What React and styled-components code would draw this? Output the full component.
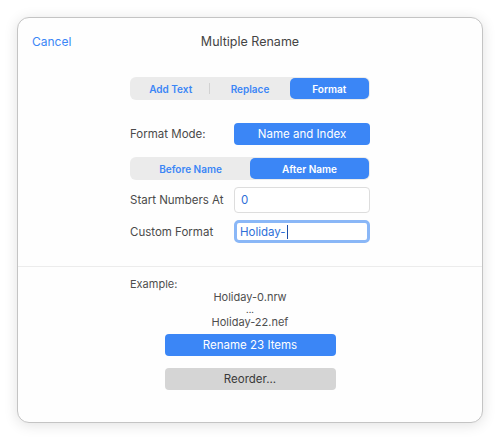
import React from 'react';
import styled, { createGlobalStyle } from 'styled-components';

const GlobalStyle = createGlobalStyle`
    body {
        margin: 0;
        background: #ffffff;
        font-family: Inter, "Liberation Sans", sans-serif;
        -webkit-font-smoothing: antialiased;
    }
`;

const BLUE = '#3b86f6';

const Stage = styled.div`
    width: 500px;
    height: 440px;
    padding: 17px;
    box-sizing: border-box;
`;

const Panel = styled.div`
    width: 466px;
    height: 406px;
    box-sizing: border-box;
    border: 1px solid #c4c4c4;
    border-radius: 12px;
    background: #fefefe;
    box-shadow: 0 2px 14px rgba(0, 0, 0, 0.12);
    display: flex;
    flex-direction: column;
`;

const Header = styled.div`
    height: 46px;
    display: grid;
    grid-template-columns: 1fr auto 1fr;
    align-items: center;
    padding: 0 14px;
`;

const CancelLink = styled.span`
    color: ${BLUE};
    font-size: 12px;
`;

const Title = styled.span`
    color: #454545;
    font-size: 12.5px;
`;

const Column = styled.div`
    width: 240px;
    margin: 0 auto;
    display: flex;
    flex-direction: column;
`;

const Form = styled(Column)`
    padding-top: 13px;
    padding-bottom: 23px;
`;

const Segmented = styled.div`
    height: 23px;
    box-sizing: border-box;
    display: flex;
    align-items: center;
    padding: 1px;
    border-radius: 6px;
    background: #ebebeb;
    margin-top: ${(p) => p.top || 0}px;
`;

const Segment = styled.div`
    flex: 1;
    height: 100%;
    display: flex;
    align-items: center;
    justify-content: center;
    position: relative;
    border-radius: 5px;
    font-size: 10px;
    font-weight: 600;
    color: ${(p) => (p.active ? '#ffffff' : BLUE)};
    background: ${(p) => (p.active ? BLUE : 'transparent')};

    ${(p) => p.divider && `
        &::after {
            content: '';
            position: absolute;
            right: 0;
            top: 5px;
            bottom: 5px;
            width: 1px;
            background: #d2d2d2;
        }
    `}
`;

const Row = styled.div`
    display: flex;
    align-items: center;
    margin-top: ${(p) => p.top || 0}px;
`;

const Label = styled.span`
    width: 104px;
    flex: none;
    font-size: 11.5px;
    color: #4a4a4a;
`;

const BlueButton = styled.div`
    flex: 1;
    height: 22px;
    display: flex;
    align-items: center;
    justify-content: center;
    border-radius: 4px;
    background: ${BLUE};
    color: #ffffff;
    font-size: 11.5px;
`;

const Field = styled.div`
    flex: 1;
    height: ${(p) => (p.focused ? 23 : 26)}px;
    box-sizing: border-box;
    display: flex;
    align-items: center;
    padding: 0 ${(p) => (p.focused ? 3 : 6)}px;
    border-radius: ${(p) => (p.focused ? 5 : 4)}px;
    border: ${(p) => (p.focused ? '3px solid #8ab7f7' : '1px solid #dddddd')};
    background: #ffffff;
    color: #2e6fd8;
    font-size: 11.5px;
`;

const Caret = styled.span`
    display: inline-block;
    width: 1px;
    height: 14px;
    margin-left: 1px;
    background: #1d4fa8;
`;

const Divider = styled.div`
    height: 1px;
    background: #ececec;
`;

const Bottom = styled(Column)`
    padding-top: 10px;
`;

const Line = styled.div`
    align-self: ${(p) => (p.left ? 'flex-start' : 'center')};
    line-height: ${(p) => p.h || 13}px;
    height: ${(p) => p.h || 13}px;
    font-size: 11px;
    color: #4e4e4e;
`;

const Ellipsis = styled(Line)`
    font-size: 9px;
    line-height: 10px;
    height: 10px;
    margin: 1px 0;
`;

const ActionButton = styled.div`
    width: 171px;
    height: 22px;
    align-self: center;
    display: flex;
    align-items: center;
    justify-content: center;
    border-radius: 4px;
    margin-top: ${(p) => p.top}px;
    background: ${(p) => (p.primary ? BLUE : '#d5d5d5')};
    color: ${(p) => (p.primary ? '#ffffff' : '#3a3a3a')};
    font-size: 11.5px;
`;

export default function App() {
    return (
        <Stage>
            <GlobalStyle />
            <Panel>
                <Header>
                    <CancelLink>Cancel</CancelLink>
                    <Title>Multiple Rename</Title>
                    <span />
                </Header>
                <Form>
                    <Segmented>
                        <Segment divider>Add Text</Segment>
                        <Segment>Replace</Segment>
                        <Segment active>Format</Segment>
                    </Segmented>
                    <Row top={23}>
                        <Label>Format Mode:</Label>
                        <BlueButton>Name and Index</BlueButton>
                    </Row>
                    <Segmented top={12}>
                        <Segment>Before Name</Segment>
                        <Segment active>After Name</Segment>
                    </Segmented>
                    <Row top={7}>
                        <Label>Start Numbers At</Label>
                        <Field>0</Field>
                    </Row>
                    <Row top={7}>
                        <Label>Custom Format</Label>
                        <Field focused>Holiday-<Caret /></Field>
                    </Row>
                </Form>
                <Divider />
                <Bottom>
                    <Line left h={14}>Example:</Line>
                    <Line>Holiday-0.nrw</Line>
                    <Ellipsis>...</Ellipsis>
                    <Line>Holiday-22.nef</Line>
                    <ActionButton primary top={5}>Rename 23 Items</ActionButton>
                    <ActionButton top={12}>Reorder...</ActionButton>
                </Bottom>
            </Panel>
        </Stage>
    );
}
